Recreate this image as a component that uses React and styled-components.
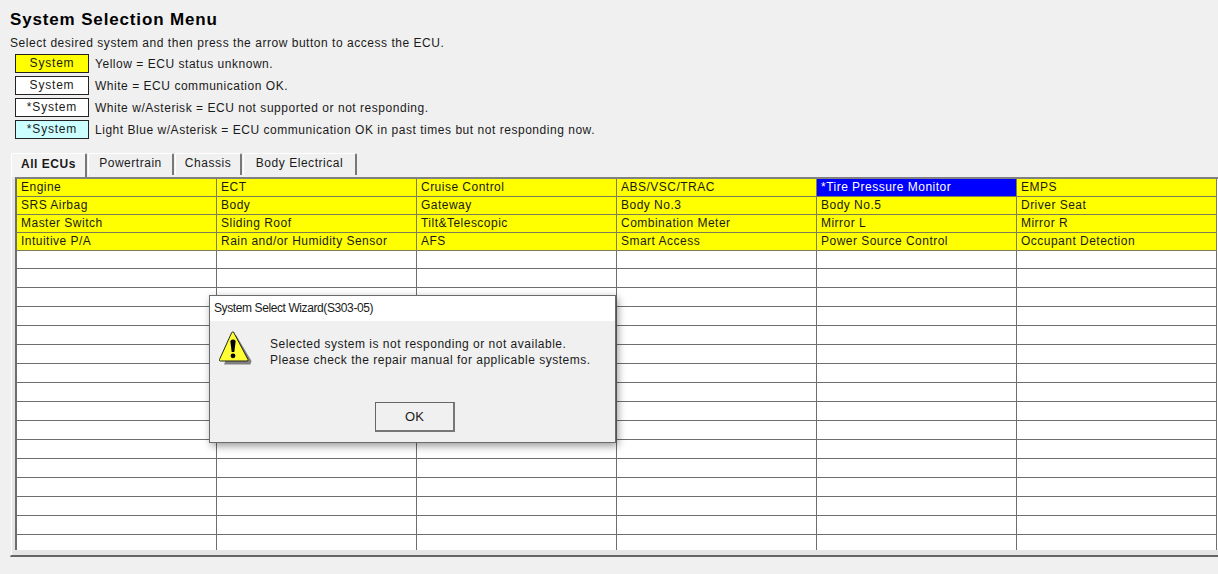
import React from "react";
import styled, { createGlobalStyle } from "styled-components";

const GlobalStyle = createGlobalStyle`
	html, body {
		margin: 0;
		height: 100%;
		background: #f0f0f0;
		overflow: hidden;
	}
`;

const Page = styled.div`
	position: relative;
	width: 1218px;
	height: 574px;
	overflow: hidden;
	box-sizing: border-box;
	padding-top: 10px;
	background: #f0f0f0;
	color: #1a1a1a;
	font-family: "Liberation Sans", Arial, sans-serif;
	font-size: 12px;
	letter-spacing: 0.53px;
`;

const Title = styled.h1`
	margin: 0 0 0 10px;
	font-size: 17px;
	line-height: 20px;
	font-weight: bold;
	letter-spacing: 0.85px;
	color: #000;
`;

const Intro = styled.p`
	margin: 4px 0 2px 10px;
	line-height: 18px;
`;

const Legend = styled.div`
	display: flex;
	flex-direction: column;
	gap: 3px;
	margin-left: 15px;
`;

const LegendRow = styled.div`
	display: flex;
	align-items: center;
	gap: 6px;
	height: 19px;
`;

const Swatch = styled.div`
	box-sizing: border-box;
	width: 74px;
	height: 19px;
	line-height: 16px;
	text-align: center;
	letter-spacing: 0.8px;
	background: ${props => props.$color};
	border: 1px solid #222;
`;

const Tabs = styled.div`
	display: flex;
	margin: 14px 0 0 11px;
	height: 24px;
`;

const Tab = styled.div`
	box-sizing: border-box;
	width: ${props => props.$width}px;
	height: ${props => (props.$active ? 24 : 22)}px;
	margin-right: 1px;
	padding-top: ${props => (props.$active ? 2 : 1)}px;
	line-height: 16px;
	text-align: center;
	background: ${props => (props.$active ? "#f3f3f3" : "#f0f0f0")};
	border-top: 1px solid #fff;
	border-left: 1px solid #fff;
	border-right: 2px solid #787878;
	border-radius: 2px 2px 0 0;
	font-weight: ${props => (props.$active ? "bold" : "normal")};
`;

const Panel = styled.div`
	box-sizing: border-box;
	margin-left: 10px;
	width: 1230px;
	height: 380px;
	padding: 0 0 5px 4px;
	border-left: 1px solid #f0f0f0;
	border-bottom: 2px solid #666;
	background: #e6e6e6;
	box-shadow: inset 1px 0 0 #fff;
`;

const Grid = styled.div`
	box-sizing: border-box;
	display: grid;
	grid-template-columns: repeat(6, 200px);
	grid-template-rows: repeat(5, 18px) repeat(15, 19px);
	height: 373px;
	overflow: hidden;
	border-top: 2px solid #808080;
	border-left: 2px solid #6e6e6e;
	background: #fff;
`;

const Cell = styled.div`
	box-sizing: border-box;
	padding-left: 4px;
	line-height: 17px;
	letter-spacing: 0.48px;
	white-space: nowrap;
	overflow: hidden;
	border-right: 1px solid ${props => (props.$kind === "empty" ? "#6e6e6e" : "#7d7d55")};
	border-bottom: 1px solid ${props => (props.$kind === "empty" ? "#6e6e6e" : "#7d7d55")};
	background: ${props =>
		props.$kind === "selected" ? "#0000ff" : props.$kind === "unknown" ? "#ffff00" : "#fff"};
	color: ${props => (props.$kind === "selected" ? "#fff" : "#1a1a1a")};
`;

const Dialog = styled.div`
	position: absolute;
	left: 209px;
	top: 295px;
	box-sizing: border-box;
	width: 407px;
	height: 148px;
	display: flex;
	flex-direction: column;
	background: #f0f0f0;
	border: 1px solid #6b6b6b;
	box-shadow: 2px 3px 8px rgba(0, 0, 0, 0.4);
`;

const DialogTitle = styled.div`
	height: 25px;
	padding-left: 4px;
	line-height: 24px;
	background: #fff;
	letter-spacing: -0.4px;
`;

const DialogBody = styled.div`
	box-sizing: border-box;
	display: flex;
	gap: 17px;
	padding: 10px 0 0 9px;
	height: 70px;
`;

const Message = styled.div`
	padding-top: 5px;
	line-height: 16px;
	letter-spacing: 0.5px;
`;

const DialogFooter = styled.div`
	display: flex;
	justify-content: center;
	padding-left: 5px;
`;

const OkButton = styled.button`
	box-sizing: border-box;
	width: 80px;
	height: 30px;
	margin-top: 11px;
	padding: 0;
	font: inherit;
	font-size: 13px;
	letter-spacing: 0;
	color: #1a1a1a;
	background: #f0f0f0;
	border: 1px solid #666;
	border-right: 2px solid #777;
	border-bottom: 2px solid #777;
`;

const legend = [
	["#ffff00", "System", "Yellow = ECU status unknown."],
	["#fff", "System", "White = ECU communication OK."],
	["#fff", "*System", "White w/Asterisk = ECU not supported or not responding."],
	["#ccffff", "*System", "Light Blue w/Asterisk = ECU communication OK in past times but not responding now."],
];

const tabs = [
	["All ECUs", 76],
	["Powertrain", 86],
	["Chassis", 67],
	["Body Electrical", 114],
];

const systems = [
	"Engine", "ECT", "Cruise Control", "ABS/VSC/TRAC", "*Tire Pressure Monitor", "EMPS",
	"SRS Airbag", "Body", "Gateway", "Body No.3", "Body No.5", "Driver Seat",
	"Master Switch", "Sliding Roof", "Tilt&Telescopic", "Combination Meter", "Mirror L", "Mirror R",
	"Intuitive P/A", "Rain and/or Humidity Sensor", "AFS", "Smart Access", "Power Source Control", "Occupant Detection",
];

function cellKind(name) {
	if (!name) return "empty";
	return name.startsWith("*") ? "selected" : "unknown";
}

function WarningIcon() {
	return (
		<svg width="34" height="34" viewBox="0 0 34 34">
			<path d="M17 4 L32.5 30 L31.5 33.5 L5 33.5 Z" fill="#808080" />
			<path d="M14.5 1 L29 28.5 Q29.5 30 28 30 L1.5 30 Q0 30 0.5 28.5 L12.5 2 Q13.5 0.2 14.5 1 Z" fill="#ffff33" stroke="#222" strokeWidth="1" />
			<path d="M11.3 10 Q14 7.2 16.7 10 L15.3 21 L12.7 21 Z" fill="#000" />
			<circle cx="14" cy="24.8" r="2.4" fill="#000" />
		</svg>
	);
}

export default function App() {
	const cells = Array.from({ length: 120 }, (_, i) => systems[i] || "");

	return (
		<Page>
			<GlobalStyle />
			<Title>System Selection Menu</Title>
			<Intro>Select desired system and then press the arrow button to access the ECU.</Intro>
			<Legend>
				{legend.map(([color, name, text]) => (
					<LegendRow key={text}>
						<Swatch $color={color}>{name}</Swatch>
						<span>{text}</span>
					</LegendRow>
				))}
			</Legend>
			<Tabs>
				{tabs.map(([name, width], i) => (
					<Tab key={name} $width={width} $active={i === 0}>{name}</Tab>
				))}
			</Tabs>
			<Panel>
				<Grid>
					{cells.map((name, i) => (
						<Cell key={i} $kind={cellKind(name)}>{name}</Cell>
					))}
				</Grid>
			</Panel>
			<Dialog>
				<DialogTitle>System Select Wizard(S303-05)</DialogTitle>
				<DialogBody>
					<WarningIcon />
					<Message>
						Selected system is not responding or not available.
						<br />
						Please check the repair manual for applicable systems.
					</Message>
				</DialogBody>
				<DialogFooter>
					<OkButton>OK</OkButton>
				</DialogFooter>
			</Dialog>
		</Page>
	);
}
